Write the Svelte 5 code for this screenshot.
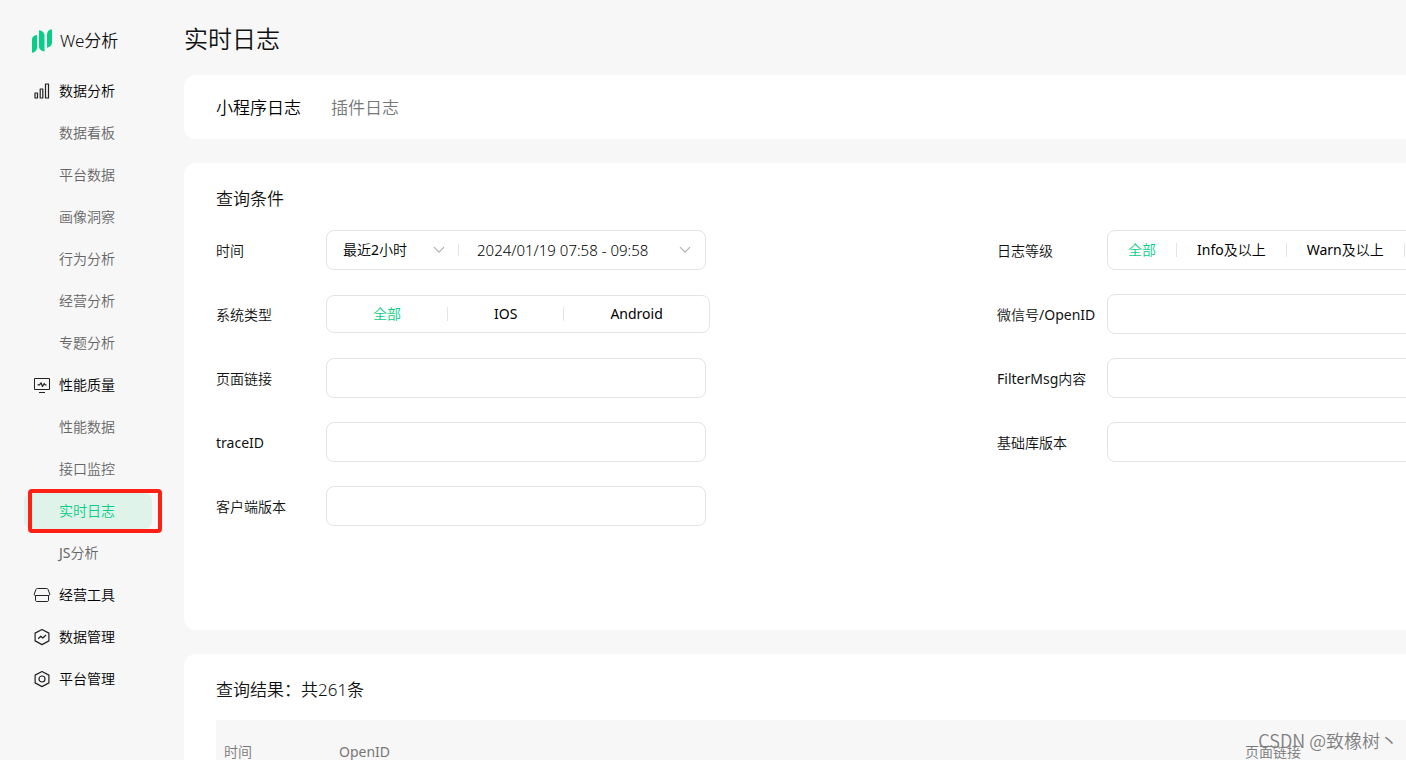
<script>
  const nav = [
    { label: '数据分析', icon: 'bars', items: ['数据看板', '平台数据', '画像洞察', '行为分析', '经营分析', '专题分析'] },
    { label: '性能质量', icon: 'monitor', items: ['性能数据', '接口监控', '实时日志', 'JS分析'] },
    { label: '经营工具', icon: 'shop', items: [] },
    { label: '数据管理', icon: 'trend', items: [] },
    { label: '平台管理', icon: 'gear', items: [] }
  ];
  const current = '实时日志';
  const levels = ['全部', 'Info及以上', 'Warn及以上'];
  const systems = ['全部', 'IOS', 'Android'];
  let level = $state('全部');
  let system = $state('全部');
</script>

{#snippet chevron()}
  <svg class="chevron" width="12" height="8" viewBox="0 0 12 8" aria-hidden="true"><path d="M1 1.2 6 6.2 11 1.2" /></svg>
{/snippet}

{#snippet textField(id, label)}
  <div class="field">
    <label class="name" for={id}>{label}</label>
    <input class="box" {id} type="text" />
  </div>
{/snippet}

<div class="page">
  <aside>
    <a class="brand" href="#home">
      <svg width="22" height="26" viewBox="0 0 22 26" aria-hidden="true">
        <path d="M1 11.500C1 9 2.600 7.200 6 7v12.500C6 22.500 4.200 24.400 1 24.700Z" />
        <path d="M8 2.200c3.200.4 5.500 2.300 5.500 5.300v16c-3.200-.4-5.500-2.300-5.500-5.300Z" />
        <path d="M16 6.500c0-3 1.900-4.900 5-5.200v13c0 3-2 5-5 5.400Z" />
      </svg>
      <span>We分析</span>
    </a>
    <nav>
      {#each nav as group}
        <a class="item group" href="#section">
          <svg width="18" height="18" viewBox="0 0 18 18" aria-hidden="true">
            {#if group.icon === 'bars'}
              <path d="M2 11h2.500v5H2zM7.200 7h2.600v9H7.200zM12.500 2H15.500v14h-3z" />
            {:else if group.icon === 'monitor'}
              <path class="thin" d="M1.500 2.500h15v11h-15z" /><path d="M6 16.500h6M4.500 8.800h2L8 6.800l1.500 3.700 1.700-3 .8 1.300h1.500" />
            {:else if group.icon === 'shop'}
              <path class="thin" d="M4.500 2.500h9c.9 0 1.300.3 1.600 1.100L16.700 8c.2.900-.2 1.500-1 1.500H2.300c-.8 0-1.200-.6-1-1.500l1.600-4.400c.3-.8.7-1.100 1.600-1.100ZM2.500 9.500V14c0 1 .5 1.500 1.500 1.500h10c1 0 1.500-.5 1.500-1.500V9.500" />
            {:else if group.icon === 'trend'}
              <path d="M9 1.500 15.900 5.100V12.900L9 16.600 2.100 12.900V5.100ZM5.200 10.700 7.800 8.200l2 1.800L13 7" />
            {:else}
              <path d="M9 1.500 15.900 5.100V12.900L9 16.600 2.100 12.900V5.100Z" /><circle cx="9" cy="9" r="3" />
            {/if}
          </svg>
          <span>{group.label}</span>
        </a>
        {#each group.items as item}
          <a class="item sub" class:active={item === current} href="#page">{item}</a>
        {/each}
      {/each}
    </nav>
  </aside>

  <main>
    <h1>实时日志</h1>

    <section class="card tabs">
      <button class="tab selected" type="button">小程序日志</button>
      <button class="tab" type="button">插件日志</button>
    </section>

    <section class="card query">
      <h2>查询条件</h2>
      <form class="fields">
        <div class="field">
          <label class="name" for="range">时间</label>
          <div class="box time">
            <div class="preset">
              <select id="range"><option>最近2小时</option></select>
              {@render chevron()}
            </div>
            <div class="span">
              <select aria-labelledby="range"><option>2024/01/19 07:58 - 09:58</option></select>
              {@render chevron()}
            </div>
          </div>
        </div>
        <div class="field">
          <span class="name" id="level">日志等级</span>
          <div class="box segments" role="radiogroup" aria-labelledby="level">
            {#each levels as option}
              <label class:on={level === option}>
                <input type="radio" name="level" value={option} bind:group={level} />{option}
              </label>
            {/each}
          </div>
        </div>
        <div class="field">
          <span class="name" id="system">系统类型</span>
          <div class="box segments wide" role="radiogroup" aria-labelledby="system">
            {#each systems as option}
              <label class:on={system === option}>
                <input type="radio" name="system" value={option} bind:group={system} />{option}
              </label>
            {/each}
          </div>
        </div>
        {@render textField('openid', '微信号/OpenID')}
        {@render textField('link', '页面链接')}
        {@render textField('filter', 'FilterMsg内容')}
        {@render textField('trace', 'traceID')}
        {@render textField('library', '基础库版本')}
        {@render textField('client', '客户端版本')}
      </form>
    </section>

    <section class="card results">
      <h2>查询结果：共261条</h2>
      <table>
        <thead>
          <tr><th class="when">时间</th><th>OpenID</th><th class="url">页面链接</th></tr>
        </thead>
      </table>
    </section>
  </main>

  <div class="watermark">CSDN @致橡树丶</div>
</div>

<style>
  :global(body) {
    overflow: hidden;
    background: #f7f7f7;
  }
  .page {
    position: relative;
    display: flex;
    height: 100vh;
    overflow: hidden;
    color: #111;
    font: 400 14px/20px "Noto Sans", "Noto Sans CJK SC DemiLight", "Noto Sans CJK SC", sans-serif;
  }
  a {
    color: inherit;
    text-decoration: none;
  }
  aside {
    flex: none;
    box-sizing: border-box;
    width: 184px;
    padding: 28px 32px 0 24px;
  }
  .brand {
    display: flex;
    align-items: center;
    gap: 7px;
    height: 26px;
    padding-left: 7px;
    font-size: 17px;
    line-height: 24px;
    font-weight: 350;
  }
  .brand svg {
    fill: #07ce85;
  }
  nav {
    display: flex;
    flex-direction: column;
    gap: 6px;
    padding-top: 19px;
  }
  .item {
    position: relative;
    display: flex;
    align-items: center;
    height: 36px;
    border-radius: 8px;
  }
  .group {
    gap: 8px;
    padding-left: 9px;
    color: #000;
  }
  .group svg {
    fill: none;
    stroke: #222;
    stroke-width: 1.2;
    stroke-linejoin: round;
  }
  .group .thin {
    stroke-width: 1;
  }
  .sub {
    padding-left: 35px;
    color: #666;
  }
  .active {
    background: #dff3eb;
    color: #07ce85;
  }
  .active::after {
    content: "";
    position: absolute;
    inset: -4px -10px -4px 4px;
    border: 4px solid #ff2015;
    border-radius: 4px;
  }
  main {
    flex: 1;
    min-width: 0;
    display: flex;
    flex-direction: column;
  }
  h1 {
    margin: 0;
    padding: 21px 0 18px;
    font-size: 24px;
    line-height: 36px;
    font-weight: 350;
  }
  h2 {
    margin: 0;
    font-size: 17px;
    line-height: 24px;
    font-weight: 350;
  }
  .card {
    flex: none;
    margin-bottom: 24px;
    padding-left: 32px;
    border-radius: 12px 0 0 12px;
    background: #fff;
  }
  .tabs {
    box-sizing: border-box;
    display: flex;
    align-items: center;
    gap: 30px;
    height: 64px;
    padding-top: 2px;
  }
  .tab {
    padding: 0;
    border: 0;
    background: none;
    color: #777;
    font: inherit;
    font-size: 17px;
    line-height: 24px;
  }
  .tab.selected {
    color: #000;
  }
  .query {
    padding-top: 24px;
    padding-bottom: 104px;
  }
  .fields {
    display: grid;
    grid-template-columns: 781fr 409fr;
    grid-auto-rows: 40px;
    gap: 24px 0;
    padding-top: 19px;
  }
  .field {
    display: flex;
    align-items: center;
    min-width: 0;
  }
  .name {
    flex: none;
    width: 110px;
    padding-top: 2px;
    white-space: nowrap;
  }
  .box {
    box-sizing: border-box;
    flex: none;
    width: 380px;
    height: 40px;
    border: 1px solid #e4e4e4;
    border-radius: 8px;
    background: #fff;
    font: inherit;
  }
  .time {
    display: flex;
    align-items: center;
  }
  .preset,
  .span {
    display: flex;
    align-items: center;
    padding-left: 16px;
  }
  .preset {
    flex: none;
    width: 102px;
    padding-right: 13px;
    border-right: 1px solid #e4e4e4;
    height: 12px;
  }
  .span {
    flex: 1;
    padding: 0 14px 0 18px;
    font-size: 15px;
    font-weight: 350;
  }
  select {
    flex: 1;
    min-width: 0;
    height: 24px;
    padding: 0;
    border: 0;
    appearance: none;
    background: none;
    color: #000;
    font: inherit;
  }
  .chevron {
    flex: none;
    fill: none;
    stroke: #b2b2b2;
    stroke-width: 1.2;
  }
  .segments {
    display: flex;
    align-items: center;
    color: #000;
  }
  .segments label {
    position: relative;
    display: flex;
    justify-content: center;
    align-items: center;
    height: 14px;
    padding: 0 20px;
    border-right: 1px solid #e4e4e4;
    white-space: nowrap;
  }
  .segments.wide {
    width: auto;
    height: 38px;
  }
  .wide label {
    padding: 0 46px;
  }
  .wide label:last-child {
    border: 0;
  }
  .segments input {
    position: absolute;
    margin: 0;
    opacity: 0;
  }
  .segments .on {
    color: #07ce85;
  }
  .results {
    padding-top: 24px;
  }
  table {
    width: 100%;
    margin-top: 18px;
    border-collapse: collapse;
    table-layout: fixed;
    background: #f7f7f7;
  }
  th {
    height: 64px;
    padding: 0 8px;
    color: #777;
    font-weight: 400;
    text-align: left;
  }
  .when {
    width: 99px;
  }
  .url {
    width: 153px;
  }
  .watermark {
    position: absolute;
    right: 8px;
    bottom: 8px;
    color: #808080;
    font: 350 18px/24px "Noto Sans CJK SC", sans-serif;
  }
</style>
